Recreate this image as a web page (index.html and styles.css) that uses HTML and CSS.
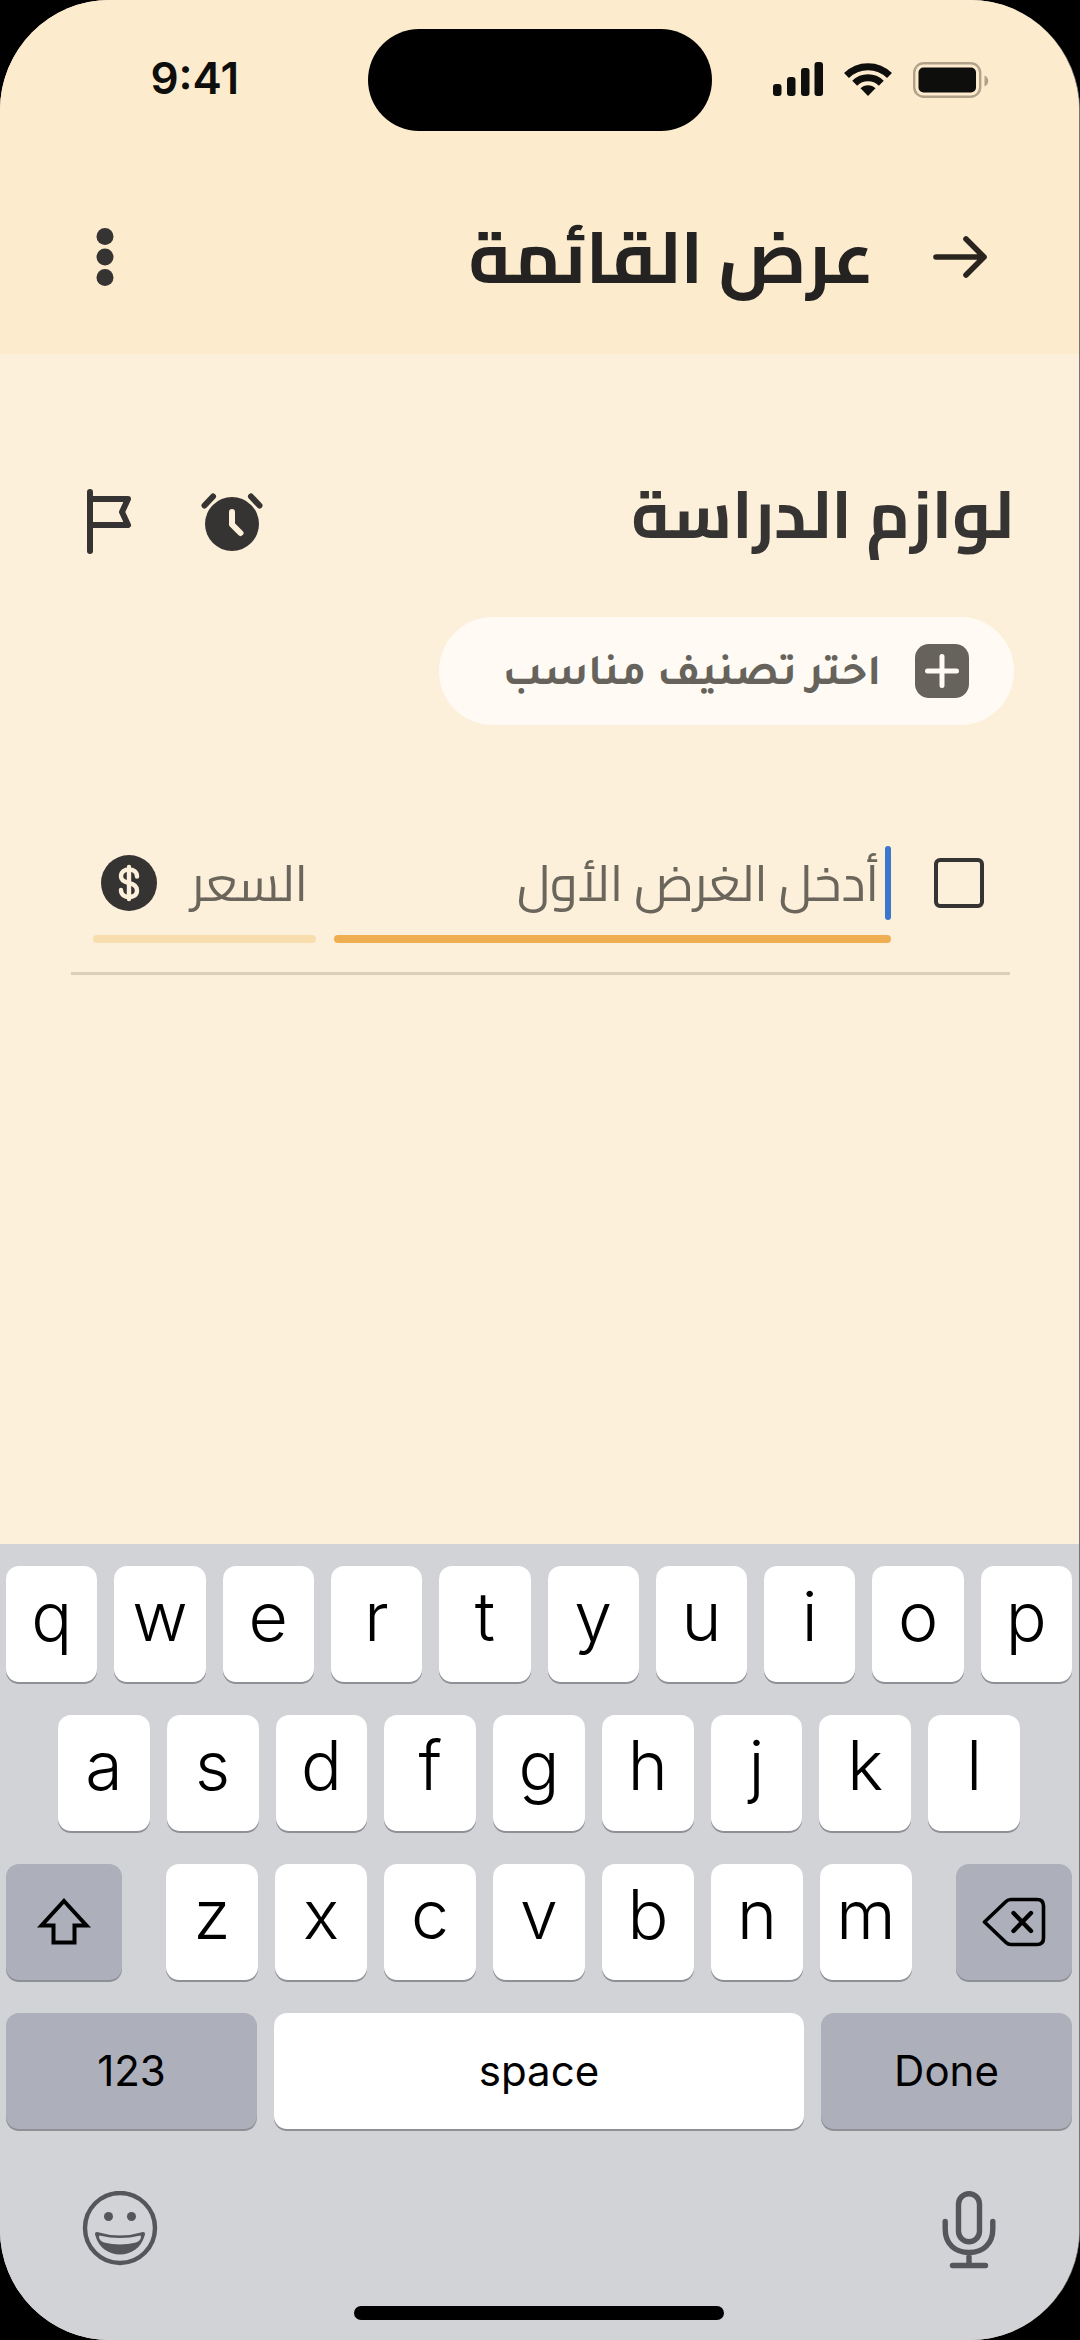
FILE: index.html
```html
<!DOCTYPE html>
<html lang="ar" dir="rtl">
<head>
<meta charset="utf-8">
<meta name="viewport" content="width=device-width, initial-scale=1">
<title>عرض القائمة</title>
<link rel="stylesheet" href="styles.css">
</head>
<body>
<div class="screen">
  <header class="top">
    <div class="status" dir="ltr">
      <time class="clock">9:41</time>
      <div class="island"></div>
      <div class="indicators">
        <svg width="50" height="34" viewBox="0 0 50 34" fill="#0e0e0c" aria-hidden="true">
          <rect x="0" y="22" width="8.500" height="12" rx="3"/><rect x="14" y="15" width="8.500" height="19" rx="3"/><rect x="28" y="6" width="8.500" height="28" rx="3"/><rect x="41.500" y="0" width="8.500" height="34" rx="3"/>
        </svg>
        <svg width="48" height="34" viewBox="0 0 48 34" aria-hidden="true">
          <g fill="none" stroke="#0e0e0c" stroke-width="7"><path d="M2.500 13.500A30.500 30.500 0 0 1 45.500 13.500"/><path d="M10.700 21.300A19 19 0 0 1 37.300 21.300"/></g>
          <path d="M24 34L16.500 26.300a10.600 10.600 0 0 1 15 0z" fill="#0e0e0c"/>
        </svg>
        <svg width="76" height="36" viewBox="0 0 76 36" aria-hidden="true">
          <rect x="1.200" y="1.200" width="66" height="33.600" rx="9.500" fill="none" stroke="#b0a289" stroke-width="2.400"/>
          <rect x="5.500" y="5.500" width="57.500" height="25" rx="5" fill="#0e0e0c"/>
          <path d="M71.500 13.500c5 1.800 5 9.200 0 11z" fill="#b0a289"/>
        </svg>
      </div>
    </div>
    <div class="appbar">
      <button class="icon-btn" type="button" aria-label="رجوع">
        <svg width="56" height="48" viewBox="0 0 56 48" fill="none" stroke="#29241d" stroke-width="5.600" stroke-linecap="round" stroke-linejoin="round"><path d="M4 24H52M34 6L52 24L34 42"/></svg>
      </button>
      <h1 class="page-title">عرض القائمة</h1>
      <button class="icon-btn" type="button" aria-label="المزيد">
        <svg width="20" height="60" viewBox="0 0 20 60" fill="#363432"><circle cx="10" cy="9.500" r="8.500"/><circle cx="10" cy="30" r="8.500"/><circle cx="10" cy="50.500" r="8.500"/></svg>
      </button>
    </div>
  </header>

  <main class="content">
    <div class="list-head">
      <h2 class="list-title">لوازم الدراسة</h2>
      <div class="list-actions">
        <button class="icon-btn" type="button" aria-label="تذكير">
          <svg width="64" height="68" viewBox="0 0 64 68" fill="none" stroke="#363432" stroke-width="6" stroke-linecap="round" stroke-linejoin="round"><circle cx="32" cy="37" r="27" fill="#363432" stroke="none"/><path d="M4.500 18.500L13 9.500M51 9.500L59.500 18.500"/><path d="M32 25V37.500L40.500 46" stroke="#fdf0da"/></svg>
        </button>
        <button class="icon-btn" type="button" aria-label="علم">
          <svg width="48" height="68" viewBox="0 0 48 68" fill="none" stroke="#363432" stroke-width="6" stroke-linecap="round" stroke-linejoin="round"><path d="M4 5V64M4 12H42L36 25L42 38H4"/></svg>
        </button>
      </div>
    </div>

    <button class="category" type="button">
      <svg width="54" height="54" viewBox="0 0 54 54" aria-hidden="true"><rect x="0" y="0" width="54" height="54" rx="14" fill="#66635c"/><path d="M27 12.500V41.500M12.500 27H41.500" stroke="#fffbf3" stroke-width="5" stroke-linecap="round"/></svg>
      <span class="category-label">اختر تصنيف مناسب</span>
    </button>

    <ul class="items">
      <li class="item">
        <input class="check" type="checkbox" aria-label="تم الشراء">
        <div class="field field-name">
          <div class="field-row">
            <span class="caret"></span>
            <input class="text-input" type="text" aria-label="الغرض" placeholder="أدخل الغرض الأول">
          </div>
        </div>
        <div class="field field-price">
          <div class="field-row">
            <input class="text-input" type="text" aria-label="السعر" placeholder="السعر">
            <svg class="coin" width="56" height="56" viewBox="0 0 56 56" aria-hidden="true"><circle cx="28" cy="28" r="28" fill="#363432"/><path d="M28 12V44M36 21.500C36 17 32.500 14.500 28 14.500S20 17 20 21.500C20 25.500 23.500 27 28 28S36 31 36 35.500S32.500 42 28 42S20 39.500 20 35" fill="none" stroke="#fdf0da" stroke-width="4.400" stroke-linecap="round"/></svg>
          </div>
        </div>
      </li>
    </ul>
  </main>

  <section class="keyboard" dir="ltr" lang="en" aria-label="Keyboard">
    <div class="keys">
      <button class="key" type="button">q</button><button class="key" type="button">w</button><button class="key" type="button">e</button><button class="key" type="button">r</button><button class="key" type="button">t</button><button class="key" type="button">y</button><button class="key" type="button">u</button><button class="key" type="button">i</button><button class="key" type="button">o</button><button class="key" type="button">p</button>
    </div>
    <div class="keys keys-home">
      <button class="key" type="button">a</button><button class="key" type="button">s</button><button class="key" type="button">d</button><button class="key" type="button">f</button><button class="key" type="button">g</button><button class="key" type="button">h</button><button class="key" type="button">j</button><button class="key" type="button">k</button><button class="key" type="button">l</button>
    </div>
    <div class="keys keys-low">
      <button class="key key-gray key-side" type="button" aria-label="Shift">
        <svg width="54" height="50" viewBox="0 0 54 50" fill="none" stroke="#000" stroke-width="4"><path d="M27 4L49.500 28.500H37.500V45.500H16.500V28.500H4.500Z"/></svg>
      </button>
      <div class="keys keys-inner">
        <button class="key" type="button">z</button><button class="key" type="button">x</button><button class="key" type="button">c</button><button class="key" type="button">v</button><button class="key" type="button">b</button><button class="key" type="button">n</button><button class="key" type="button">m</button>
      </div>
      <button class="key key-gray key-side" type="button" aria-label="Delete">
        <svg width="64" height="50" viewBox="0 0 64 50" fill="none" stroke="#000" stroke-width="3.600" stroke-linecap="round" stroke-linejoin="round"><path d="M2.500 25L24 4.500Q26 2.500 29 2.500H55Q61.500 2.500 61.500 9V41Q61.500 47.500 55 47.500H29Q26 47.500 24 45.500Z"/><path d="M31.500 16L49 34M49 16L31.500 34" stroke-width="4.400"/></svg>
      </button>
    </div>
    <div class="keys keys-bottom">
      <button class="key key-gray key-label" type="button">123</button>
      <button class="key key-label" type="button">space</button>
      <button class="key key-gray key-label" type="button">Done</button>
    </div>
    <div class="key-tools">
      <button class="icon-btn" type="button" aria-label="Emoji">
        <svg width="76" height="80" viewBox="0 0 76 80"><circle cx="38" cy="37" r="35" fill="none" stroke="#54565b" stroke-width="4.400"/><circle cx="26.500" cy="25.500" r="4.500" fill="#54565b"/><circle cx="49.500" cy="25.500" r="4.500" fill="#54565b"/><path d="M15 41Q38 48 61 41Q64 41 62.500 45C59 57 49 63.500 38 63.500S17 57 13.500 45Q12 41 15 41ZM17.500 44.500Q16.500 45 17.500 48Q19 51 22 51.500Q38 55.500 54 51.500Q57 51 58.500 48Q59.500 45 58.500 44.500Q38 49.500 17.500 44.500Z" fill="#54565b" fill-rule="evenodd"/></svg>
      </button>
      <button class="icon-btn" type="button" aria-label="Dictate">
        <svg width="54" height="80" viewBox="0 0 54 80" fill="none" stroke="#54565b" stroke-width="5.400" stroke-linecap="round"><rect x="16.500" y="2.700" width="21" height="48" rx="10.500"/><path d="M3.200 30.500V38C3.200 53 13 61.500 27 61.500S50.800 53 50.800 38V30.500M27 62V74M10.500 74.500H43.500"/></svg>
      </button>
    </div>
    <div class="home-bar"></div>
  </section>
</div>
</body>
</html>
```
FILE: styles.css
```css
* { box-sizing: border-box; }

body {
  margin: 0;
  background: #000;
  font-family: "Cairo", "DejaVu Sans", sans-serif;
  color: #363432;
}

button, input {
  font: inherit;
  color: inherit;
  margin: 0;
  padding: 0;
  border: 0;
  background: none;
}

svg { display: block; flex: none; }

.screen {
  display: flex;
  flex-direction: column;
  min-height: 100vh;
  overflow: hidden;
  border-right: 1px solid #777573;
  border-radius: 110px;
  background: #fdf0da;
}

.top { background: #fdebce; }

.status {
  display: grid;
  grid-template-columns: 1fr 344px 1fr;
  padding: 29px 0;
}

.clock {
  justify-self: center;
  align-self: center;
  font: 600 44px/48px "Inter", sans-serif;
  color: #0e0e0c;
  padding: 0 0 4px 22px;
}

.island {
  height: 102px;
  border-radius: 51px;
  background: #000;
}

.indicators {
  display: flex;
  align-items: flex-start;
  gap: 21px;
  padding: 33px 0 0 61px;
}

.appbar {
  display: flex;
  align-items: center;
  height: 194px;
  padding: 0 91px 0 95px;
}

.page-title {
  flex: 1;
  margin: 0 58px 0 0;
  font-size: 72px;
  line-height: 96px;
  font-weight: 700;
  color: #242321;
}

.content {
  flex: 1;
  padding: 133px 65px 60px 71px;
}

.list-head {
  display: flex;
  align-items: center;
  justify-content: space-between;
  height: 68px;
  padding: 0 0 0 15px;
}

.list-title {
  margin: 0;
  padding-bottom: 14px;
  font-size: 66px;
  line-height: 68px;
  font-weight: 700;
}

.list-actions { display: flex; gap: 66px; }

.category {
  display: flex;
  align-items: center;
  gap: 34px;
  height: 108px;
  margin-top: 62px;
  padding: 0 45px 0 64px;
  border-radius: 54px;
  background: #fffbf4;
  color: #66635c;
  font: 700 44px/54px "Tajawal", "DejaVu Sans", sans-serif;
}

.category-label { padding-top: 14px; }

.items {
  margin: 121px 4px 0 0;
  padding: 0;
  list-style: none;
}

.item {
  display: flex;
  padding: 0 26px 29px 22px;
  border-bottom: 3px solid #dacfb8;
}

.check {
  appearance: none;
  flex: none;
  width: 50px;
  height: 50px;
  margin: 12px 0 0 43px;
  border: 4px solid #363432;
  border-radius: 6px;
}

.field { min-width: 0; }

.field::after {
  content: "";
  display: block;
  height: 8px;
  margin-top: 15px;
  border-radius: 4px;
  background: #efae52;
}

.field-name { flex: 5; }

.field-price {
  flex: 2;
  margin-right: 18px;
}

.field-price::after { background: #f8ddae; }

.field-row {
  display: flex;
  align-items: center;
  height: 74px;
}

.field-price .field-row { padding: 0 8px; }

.caret {
  flex: none;
  width: 6px;
  height: 74px;
  margin-left: 6px;
  border-radius: 3px;
  background: #3b77cc;
}

.text-input {
  flex: 1;
  min-width: 0;
  width: 100%;
  height: 74px;
  font-size: 50px;
  outline: 0;
}

.text-input::placeholder { color: #6b665c; opacity: 1; }

.keyboard {
  padding: 22px 7px 20px 6px;
  background: #d2d3d7;
}

.keys {
  display: grid;
  grid-auto-flow: column;
  grid-auto-columns: 1fr;
  gap: 17px;
  margin-bottom: 33px;
}

.keys-home { padding: 0 52px; }

.keys-low {
  grid-template-columns: 116px 1fr 116px;
  gap: 44px;
}

.keys-inner {
  gap: 17px;
  margin: 0;
}

.keys-bottom { grid-template-columns: 251px 1fr 251px; }

.key {
  display: flex;
  align-items: center;
  justify-content: center;
  min-width: 0;
  height: 116px;
  padding-bottom: 16px;
  border-radius: 13px;
  background: #fff;
  box-shadow: 0 2px 0 #8f8f96;
  color: #000;
  font: 300 68px/80px "Inter", sans-serif;
}

.key-gray { background: #adafba; }

.key-side { padding-bottom: 0; }

.key-label {
  padding-bottom: 0;
  font-size: 42px;
  font-weight: 400;
}

.key-tools {
  display: flex;
  justify-content: space-between;
  padding: 29px 76px 35px 76px;
}

.home-bar {
  width: 370px;
  max-width: 60%;
  height: 14px;
  margin: 0 auto;
  border-radius: 7px;
  background: #000;
}
```
